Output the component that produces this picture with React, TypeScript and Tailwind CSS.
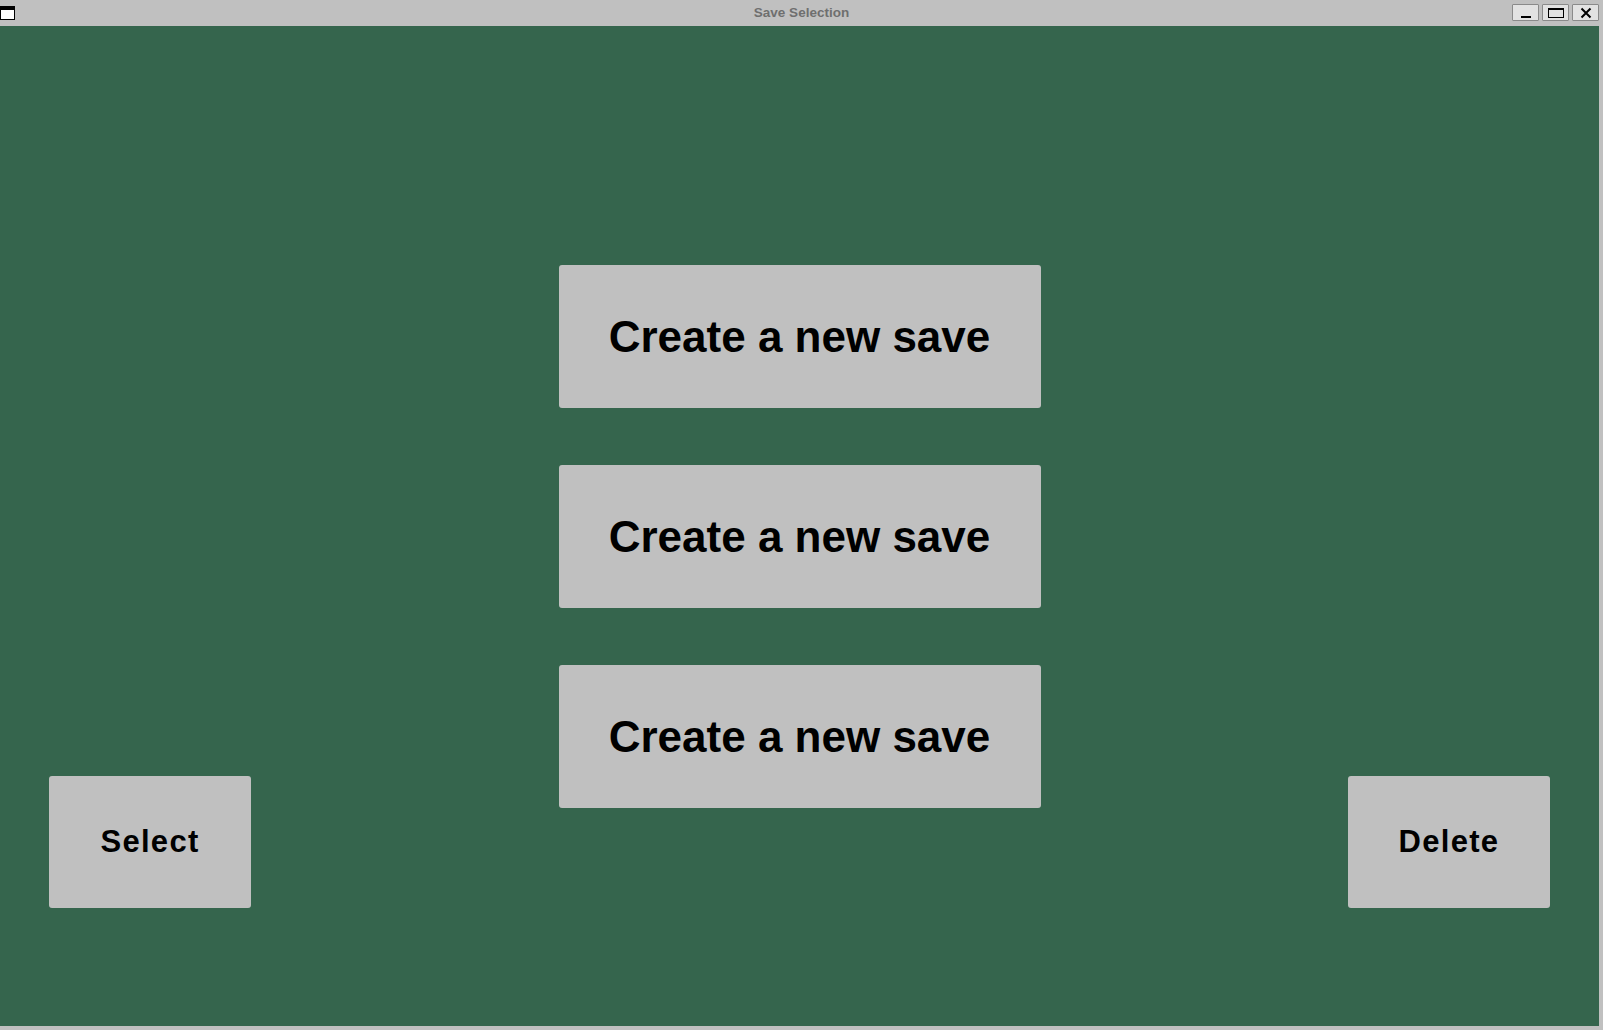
import React from 'react';

const font = { fontFamily: '"Liberation Sans", Arial, sans-serif' };

const WinButton: React.FC<{ children: React.ReactNode }> = ({ children }) => (
  <div className="flex h-[17px] w-[27px] items-center justify-center rounded-[1px] border border-[#8a8a8a] bg-[#e2e2e2]">
    {children}
  </div>
);

const TitleBar: React.FC = () => (
  <div className="relative flex h-[26px] items-center justify-center bg-[#c0c0c0]">
    <div className="absolute left-0 top-[6px] h-[14px] w-[15px] border-[1.5px] border-t-[4px] border-black bg-white" />
    <span className="text-[13.5px] font-bold text-[#6f6f6f]" style={font}>
      Save Selection
    </span>
    <div className="absolute right-[4px] top-[4px] flex gap-[3px]">
      <WinButton>
        <div className="mt-[8px] h-[2px] w-[10px] bg-black" />
      </WinButton>
      <WinButton>
        <div className="h-[10px] w-[16px] border border-t-[2px] border-black" />
      </WinButton>
      <WinButton>
        <svg width="12" height="12" viewBox="0 0 12 12">
          <path d="M1.5 1.5 L10.5 10.5 M10.5 1.5 L1.5 10.5" stroke="black" strokeWidth="2" />
        </svg>
      </WinButton>
    </div>
  </div>
);

const SaveSlot: React.FC<{ label: string }> = ({ label }) => (
  <button
    className="flex h-[143px] w-[482px] items-center justify-center rounded-[3px] bg-[#c0c0c0] text-[44px] font-bold text-black"
    style={font}
  >
    {label}
  </button>
);

const SideButton: React.FC<{ label: string }> = ({ label }) => (
  <button
    className="mt-[511px] flex h-[132px] w-[202px] items-center justify-center rounded-[3px] bg-[#c0c0c0] text-[31px] font-bold tracking-[1.3px] text-black"
    style={font}
  >
    {label}
  </button>
);

export default function App() {
  const slots = ['Create a new save', 'Create a new save', 'Create a new save'];
  return (
    <div className="flex h-[1030px] w-[1603px] flex-col bg-[#c0c0c0]">
      <TitleBar />
      <div className="mr-[4px] mb-[4px] flex flex-1 items-start justify-between bg-[#35654d] px-[49px] pt-[239px]">
        <SideButton label="Select" />
        <div className="flex flex-col gap-[57px]">
          {slots.map((s, i) => (
            <SaveSlot key={i} label={s} />
          ))}
        </div>
        <SideButton label="Delete" />
      </div>
    </div>
  );
}
